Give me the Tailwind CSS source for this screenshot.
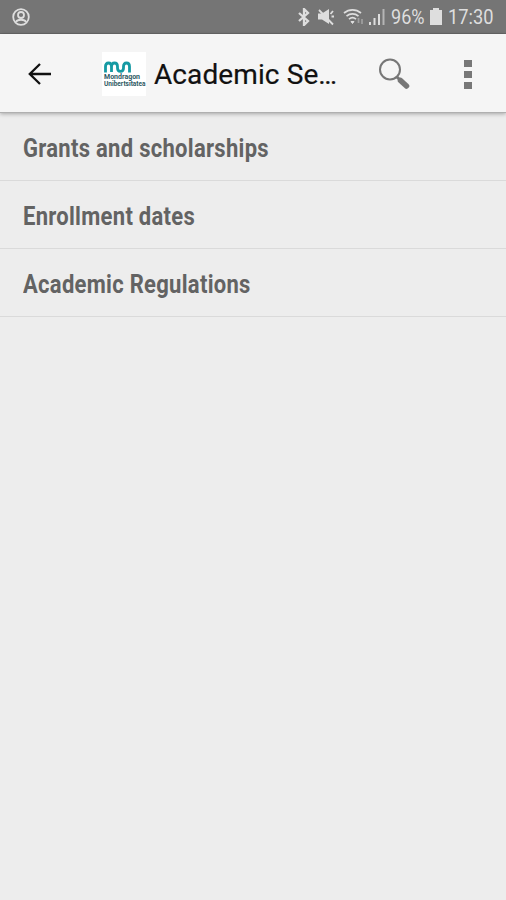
<!DOCTYPE html>
<html lang="en">
<head>
    <meta charset="UTF-8">
    <meta name="viewport" content="width=device-width, initial-scale=1.0">
    <script src="https://cdn.jsdelivr.net/npm/@tailwindcss/browser@4"></script>
    <title>Academic Services</title>
</head>
<body class="bg-[#ededed] min-h-screen font-['Roboto',sans-serif] overflow-hidden">
    <!-- Status bar -->
    <div class="h-[34px] bg-[#757575] border-b border-[#686868] flex items-center justify-between px-3 pt-px text-[#dedede]">
        <svg class="w-[18px] h-[18px]" viewBox="0 0 18 18" fill="none" stroke="currentColor" stroke-width="1.8">
            <circle cx="9" cy="9" r="7.8"/>
            <circle cx="9" cy="7" r="3"/>
            <path d="M4 14c1.2-3 8.8-3 10 0"/>
        </svg>
        <div class="flex items-center">
            <svg class="w-3 h-[18px] mr-[7px]" viewBox="0 0 12 18" fill="none" stroke="currentColor" stroke-width="2.3">
                <path d="M1 5l9 8-4 4V1l4 4-9 8"/>
            </svg>
            <svg class="w-[18px] h-[18px] mr-[8px]" viewBox="0 0 18 18" fill="currentColor">
                <path d="M1 5.5h4l7-4.5v15l-7-4.5H1z"/>
                <path d="M2 2l14 14.5M13.5 6l2.500-3M14.500 8.500h2.500" stroke="currentColor" stroke-width="1.8"/>
            </svg>
            <svg class="w-[22px] h-[18px] mr-[3px]" viewBox="0 0 22 18" fill="none" stroke="currentColor" stroke-width="1.7">
                <path d="M1 5c5-4.3 12-4.3 17 0M3.5 8.2c3.5-3 8.5-3 12 0M6 11.2c2.3-2 4.7-2 7 0"/>
                <path d="M8 13.5h3l-1.5 2z" fill="currentColor" stroke-width="1"/>
                <path d="M15.5 10v5M19 11v5" stroke="#a0a0a0"/>
            </svg>
            <svg class="w-[18px] h-[18px] mr-[5px]" viewBox="0 0 18 18" fill="currentColor">
                <path d="M1 14h2v3H1zM5.5 10h2v7h-2zM10 6h2v11h-2z"/>
                <path d="M14.5 1h2v16h-2z" fill="#b5b5b5"/>
            </svg>
            <span class="w-[35px] pt-px text-[21px] leading-none whitespace-nowrap"><span class="inline-block origin-left scale-x-[.86]">96%</span></span>
            <svg class="w-3 h-[18px] ml-[4px] mr-[6px]" viewBox="0 0 12 18" fill="currentColor">
                <path d="M3 0h6v2h3v15H0V2h3z"/>
            </svg>
            <span class="w-[46px] pt-px text-[21px] leading-none whitespace-nowrap"><span class="inline-block origin-left scale-x-[.87]">17:30</span></span>
        </div>
    </div>

    <!-- Toolbar -->
    <header class="relative h-[79px] bg-[#f5f5f5] border-b border-[#b0b0b0] shadow-[0_1px_4px_rgba(0,0,0,0.3)] flex items-center pt-[2px] pl-[28px]">
        <svg class="w-6 h-6" viewBox="0 0 24 24" fill="none" stroke="#111" stroke-width="2.3">
            <path d="M23 12H2M12 2L1.8 12 12 22"/>
        </svg>
        <div class="w-11 h-11 bg-white ml-[50px] pt-[9px] pl-[2px] overflow-hidden">
            <svg class="w-[27px] h-[12px]" viewBox="0 0 27 12" fill="none" stroke="#159aa3" stroke-width="2.8">
                <path d="M1.5 11.5V5.5Q1.5 2 4.5 2T7.5 5.5V11V5.5Q7.5 2 10.500 2T13.500 5.500V7Q13.500 10.300 16.500 10.300T19.500 7V5.500Q19.500 2 22.500 2T25.500 5.500V11.500"/>
            </svg>
            <div class="mt-px text-[7px] leading-[7px] font-bold text-[#2d5963] whitespace-nowrap">
                <div>Mondragon</div>
                <div class="origin-left scale-x-[.93]">Unibertsitatea</div>
            </div>
        </div>
        <h1 class="ml-[8px] w-[225px] pt-[2px] text-[28px] leading-none text-[#111] tracking-[.1px] whitespace-nowrap [-webkit-text-stroke:0.2px_#111]">Academic Se…</h1>
        <svg class="w-8 h-8 shrink-0" viewBox="0 0 32 32" fill="none" stroke="#777">
            <circle cx="11" cy="11.5" r="10" stroke-width="2"/>
            <path d="M18 19l3 3" stroke-width="3"/>
            <path d="M21.5 22.5l6 5.5" stroke-width="5.5" stroke-linecap="round"/>
        </svg>
        <div class="ml-[53px] flex flex-col gap-[4px]">
            <span class="w-[8px] h-[7px] bg-[#777]"></span>
            <span class="w-[8px] h-[7px] bg-[#777]"></span>
            <span class="w-[8px] h-[7px] bg-[#777]"></span>
        </div>
    </header>

    <!-- Sections -->
    <ul class="text-[25px] font-bold text-[#636363] tracking-[.33px] whitespace-nowrap">
        <li class="h-[68px] pl-[23px] pt-[5px] flex items-center border-b border-[#dadada]"><span class="origin-left scale-x-[.88]">Grants and scholarships</span></li>
        <li class="h-[68px] pl-[23px] pt-[5px] flex items-center border-b border-[#dadada]"><span class="origin-left scale-x-[.88]">Enrollment dates</span></li>
        <li class="h-[68px] pl-[23px] pt-[5px] flex items-center border-b border-[#dadada]"><span class="origin-left scale-x-[.88]">Academic Regulations</span></li>
    </ul>
</body>
</html>
